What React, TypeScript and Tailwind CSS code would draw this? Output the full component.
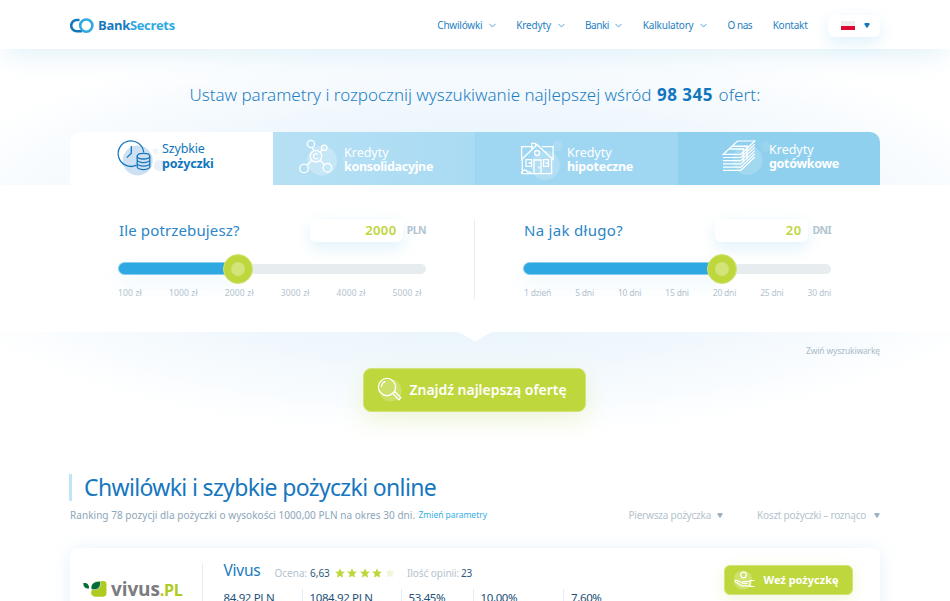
import type { ReactNode } from "react";

const navItems = [
  { label: "Chwilówki", menu: true, track: "tracking-[-0.24px]" },
  { label: "Kredyty", menu: true, track: "tracking-[-0.13px]" },
  { label: "Banki", menu: true, track: "tracking-[-0.44px]" },
  { label: "Kalkulatory", menu: true, track: "tracking-[-0.21px]" },
  { label: "O nas", menu: false, track: "tracking-[-0.43px]" },
  { label: "Kontakt", menu: false, track: "tracking-[-0.23px]" },
];

function Chevron() {
  return (
    <svg className="ml-[6.5px] h-[5px] w-[7px]" viewBox="0 0 7 5" fill="none" stroke="#4b9ad3" strokeWidth="0.9">
      <path d="M0.4 0.8 3.5 4 6.6 0.8" />
    </svg>
  );
}

function Triangle({ className }: { className: string }) {
  return (
    <svg className={className} viewBox="0 0 6 5" fill="currentColor">
      <path d="M1 0h4Q5.800 .2 5.500 1.200L3.600 4.400Q3 5 2.400 4.400L.5 1.200Q.2 .2 1 0Z" />
    </svg>
  );
}

function Logo() {
  return (
    <div className="flex items-center">
      <svg className="h-[16px] w-[25px]" viewBox="0 0 25 16" fill="none" strokeWidth="2.6">
        <path d="M9.500 2H6.800A5.600 5.600 0 0 0 6.800 13.200H12" stroke="#1276bd" />
        <circle cx="16.300" cy="7.600" r="6.100" stroke="#2fa9e1" />
      </svg>
      <span className="ml-[3px] font-['Open_Sans'] text-[13px] font-bold tracking-[-0.33px] text-[#1779c0]">
        Bank<span className="text-[#2fa9e1]">Secrets</span>
      </span>
    </div>
  );
}

function Header() {
  return (
    <header className="relative z-10 h-[49px] bg-white shadow-[0_12px_26px_-6px_rgba(60,175,225,0.16)]">
      <div className="mx-auto flex h-full w-[810px] items-center justify-between pt-[2px]">
        <Logo />
        <nav className="flex items-center text-[10px] text-[#1f7fc3]">
          {navItems.map((n) => (
            <a key={n.label} className="mr-[20.4px] flex items-center whitespace-nowrap">
              <span className={n.track}>{n.label}</span>
              {n.menu && <Chevron />}
            </a>
          ))}
          <div className="flex h-[22px] w-[52px] items-center rounded-md bg-white pl-[13px] shadow-[0_6px_16px_rgba(60,175,225,0.17)]">
            <span className="flex h-[9px] w-[14px] flex-col">
              <span className="h-[4.5px] bg-[#eeeeee]" />
              <span className="h-[4.5px] bg-[#dc0a32]" />
            </span>
            <Triangle className="ml-[8.5px] h-[5px] w-[6px] text-[#1276bd]" />
          </div>
        </nav>
      </div>
    </header>
  );
}

function ClockIcon() {
  return (
    <svg className="h-[40px] w-[44px] shrink-0 overflow-visible" viewBox="118 138 44 40" fill="none" stroke="#1677be" strokeWidth="1.3">
      <g fill="#cde1f2" stroke="none">
        <circle cx="137.7" cy="160.5" r="15" />
        <circle cx="155.7" cy="151" r="2.7" opacity=".35" />
        <circle cx="159.3" cy="165.5" r="5.5" opacity=".45" />
      </g>
      <path d="M136.5 165.2A12.8 12.8 0 1 1 143.7 152.4M131.3 146v7.3l-4.5 4.3" />
      <ellipse cx="143.5" cy="156.2" rx="6.3" ry="2.8" />
      <path d="M137.2 156.2v10.6c0 1.5 2.8 2.8 6.3 2.8s6.3-1.3 6.3-2.8v-10.6M137.2 159.8c0 1.5 2.8 2.8 6.3 2.8s6.3-1.3 6.3-2.8M137.2 163.3c0 1.5 2.8 2.8 6.3 2.8s6.3-1.3 6.3-2.8" />
    </svg>
  );
}

function NodesIcon() {
  return (
    <svg className="h-[40px] w-[44px] shrink-0 overflow-visible" viewBox="300 138 44 40" fill="none" stroke="#fff" strokeWidth="1.3">
      <g fill="#fff" stroke="none">
        <circle cx="322" cy="160.7" r="15" opacity=".25" />
        <circle cx="347" cy="159" r="5.2" opacity=".08" />
      </g>
      <circle cx="311" cy="144" r="3.7" />
      <circle cx="324.3" cy="147.8" r="2.7" />
      <circle cx="316" cy="156.3" r="5.7" />
      <circle cx="304" cy="168.4" r="4.3" />
      <circle cx="327.4" cy="167.8" r="4.3" />
      <path d="M312.4 147.4l1.6 3.6M322.3 149.8l-2.5 2.4M307 165.2l4.9-4.9M324.3 164.8l-4.2-4.6M318 154.5a2.6 2.6 0 1 0 0 3.6" />
    </svg>
  );
}

function HouseIcon() {
  return (
    <svg className="h-[40px] w-[46px] shrink-0 overflow-visible" viewBox="521 138 46 40" fill="none" stroke="#fff" strokeWidth="1.3">
      <g fill="#fff" stroke="none">
        <circle cx="545.3" cy="165.3" r="14.7" opacity=".2" />
        <circle cx="557.5" cy="145.8" r="5.3" opacity=".12" />
      </g>
      <path d="M533 146.7h-11.4v12.8l15.5-14.8 16 14.8v-12.8h-11.3M531.7 149v-5.6h4v2" />
      <path d="M522.3 159v14.7h29.3v-14.7M521.5 173.7c.2-4 4.5-5 6.3-1.6 2-.8 3.4 0 3.5 1.6M534 173.5v-13.5h7v13.5M538.8 166.5v2" />
      <path d="M526 159.7h5.5v6.6H526zM543.500 159.7h5v6.6h-5zM528.5 163h3M545.5 163h3" />
      <circle cx="537.1" cy="153" r="2.5" />
    </svg>
  );
}

function CashIcon() {
  return (
    <svg className="h-[40px] w-[46px] shrink-0 overflow-visible" viewBox="723 138 46 40" fill="none" stroke="#fff" strokeWidth="1.2">
      <g fill="#fff" stroke="none">
        <circle cx="747.5" cy="160" r="15" opacity=".18" />
        <circle cx="766" cy="146.8" r="5.3" opacity=".09" />
      </g>
      <path d="M723.3 154.3 737.5 141H754.8L740.8 154.3Z" />
      <path d="M723 157.5h17.8l14-13.3M723 160.7h17.800l14-13.300M723 163.900h17.800l14-13.300M723 167.100h17.800l14-13.300M723 170.300h17.800l14-13.300" />
      <path d="M732.5 146.2h14.5v13M729.5 149h14v13" strokeWidth="1.5" />
    </svg>
  );
}

type TabProps = { icon: ReactNode; top: string; bottom: string; className: string; trackTop: string; trackBottom: string };

function Tab({ icon, top, bottom, className, trackTop, trackBottom }: TabProps) {
  return (
    <button className={`flex h-[53px] w-full items-start text-left ${className}`}>
      {icon}
      <span className="relative flex flex-col text-[12.5px] leading-[14.5px]">
        <span className={trackTop}>{top}</span>
        <span className={`font-bold ${trackBottom}`}>{bottom}</span>
      </span>
    </button>
  );
}

type SliderProps = {
  title: string; titleTrack: string; value: string; unit: string; fill: string; thumb: string; marks: string[]; marksClass: string;
};

function Slider({ title, titleTrack, value, unit, fill, thumb, marks, marksClass }: SliderProps) {
  return (
    <div className="w-[308px]">
      <div className="flex h-[23px] items-center">
        <h3 className={`flex-1 whitespace-nowrap pl-px text-[15px] font-normal text-[#2b86c7] ${titleTrack}`}>{title}</h3>
        <div className="flex h-[23px] w-[93px] items-center justify-end rounded-md bg-white pr-[6px] text-[13px] font-semibold tracking-[0.4px] text-[#bdd63b] shadow-[0_6px_16px_rgba(60,175,225,0.16)]">
          {value}
        </div>
        <span className="w-[23.5px] text-right text-[10.5px] font-bold tracking-[-0.6px] text-[#b3c4d0]">{unit}</span>
      </div>
      <div className="relative mt-[21.5px] h-[10px] rounded-full bg-[#e7ecef]">
        <div className={`absolute -top-[1.5px] left-0 h-[13px] rounded-full border border-[#8bcdee] bg-[#2da8e1] shadow-[0_8px_20px_rgba(60,175,225,0.1)] ${fill}`} />
        <div className={`absolute -top-[10px] flex size-[30px] items-center justify-center rounded-full border border-[#d3e379] bg-[#bed73c] ${thumb}`}>
          <div className="size-[14px] rounded-full bg-[#d2e378]" />
        </div>
      </div>
      <div className={`mt-[13px] flex justify-between whitespace-nowrap text-[8.5px] text-[#b4c3ce] ${marksClass}`}>
        {marks.map((m) => (
          <span key={m}>{m}</span>
        ))}
      </div>
    </div>
  );
}

function Star({ className }: { className: string }) {
  return (
    <svg className={`size-[10px] ${className}`} viewBox="0 0 10 10" fill="currentColor">
      <path d="M5 .2 6.4 3.4 9.9 3.8 7.3 6.1 8 9.6 5 7.9 2 9.6 2.7 6.1.1 3.8 3.6 3.4Z" />
    </svg>
  );
}

const stats = [
  { value: "84,92 PLN", className: "w-[78px]" },
  { value: "1084,92 PLN", className: "w-[99px] border-l pl-[7px]" },
  { value: "53,45%", className: "w-[72px] border-l pl-[7px]" },
  { value: "10,00%", className: "w-[90.5px] border-l pl-[7px]" },
  { value: "7,60%", className: "border-l pl-[7px]" },
];

function OfferCard() {
  return (
    <article className="mt-[25px] flex h-[120px] rounded-lg bg-white shadow-[0_2px_20px_rgba(60,150,220,0.13)]">
      <div className="mt-[15px] flex h-[100px] w-[133px] items-start border-r border-[#dfeef8] pl-[13px]">
        <svg className="mt-[18px] h-[17px] w-[24px]" viewBox="0 0 24 17">
          <path d="M9 7.5C9 3 11 0 16 0h4.5Q23.5 0 23.5 3v9q0 3.8-4 3.8H12.5Q9.5 15.8 8 12.5Z" fill="#b0cb1f" />
          <path d="M8.2 8.3C7.5 3 10.5.2 17.5.2 18 6.5 15 9.800 8.200 8.300Z" fill="#046a38" stroke="#fff" strokeWidth=".6" />
          <path d="M.3 2C4.500 1.800 6.300 3.800 6 7.600 2.300 7.800.3 5.800.3 2Z" fill="#046a38" />
        </svg>
        <span className="ml-[4px] mt-[12px] font-['Open_Sans'] text-[19px] leading-[28px] font-bold tracking-[-0.1px] text-[#7b7c80]">
          vivus<span className="text-[16px] tracking-[-0.4px] text-[#b0cb1f]">.PL</span>
        </span>
      </div>
      <div className="flex-1 pl-[20.5px] pt-[13px]">
        <div className="flex h-[20px] items-center whitespace-nowrap text-[10px]">
          <span className="w-[51px] text-[15.5px] tracking-[-0.24px] text-[#1a7ac0]">Vivus</span>
          <span className="mt-[5px] w-[35.5px] text-[#b4c3ce]">Ocena:</span>
          <span className="mt-[5px] w-[24.5px] text-[#2d5878]">6,63</span>
          <span className="mt-[4px] flex gap-[2.6px] text-[#bed73c]">
            <Star className="" />
            <Star className="" />
            <Star className="" />
            <Star className="" />
            <Star className="text-[#f1f6da]" />
          </span>
          <span className="ml-[12px] mt-[5px] w-[54px] tracking-[-0.05px] text-[#b4c3ce]">Ilość opinii:</span>
          <span className="mt-[5px] text-[#2d5878]">23</span>
        </div>
        <div className="mt-[8px] flex whitespace-nowrap text-[11.5px] leading-[17px] tracking-[-0.37px] text-[#1d5078]">
          {stats.map((s) => (
            <span key={s.value} className={`border-[#dfeef8] ${s.className}`}>{s.value}</span>
          ))}
        </div>
      </div>
      <button className="mr-[27px] mt-[17px] flex h-[30px] w-[129px] items-center rounded-md border border-[#d3e379] bg-[#bed73c] pl-[8px] text-[11px] font-bold text-white shadow-[0_3px_14px_rgba(190,215,60,0.22)]">
        <svg className="mr-[8.5px] h-[20px] w-[22px]" viewBox="0 0 22 20" fill="none" stroke="#fff" strokeWidth="1.2">
          <circle cx="10" cy="10" r="9.5" fill="#fff" opacity=".25" stroke="none" />
          <circle cx="10.5" cy="5" r="2.8" />
          <path d="M21.5 10.5H17v6h4.5M17 11.5h-6c-2.5 0-2.5 1.8 0 1.8h3.5M8.5 12.5 4 10.5c-1.8-.5-2.5.8-1 1.8l6 3.5h8" />
        </svg>
        Weź pożyczkę
      </button>
    </article>
  );
}

export default function App() {
  return (
    <div className="h-[601px] w-full overflow-hidden bg-white font-['Noto_Sans',sans-serif]">
      <Header />
      <section className="h-[391px] bg-[radial-gradient(ellipse_580px_205px_at_475px_185px,#e4f1fb_0%,#eaf5fc_45%,#f5fafe_75%,#ffffff_100%)]">
        <h1 className="flex h-[83px] justify-center whitespace-nowrap pt-[33.5px] text-[17px] leading-[24px] font-light text-[#1f7fc3]">
          <span className="tracking-[-0.02px]">Ustaw parametry i rozpocznij wyszukiwanie najlepszej wśród</span>
          <strong className="mx-[5.5px] font-bold tracking-[0.49px] text-[#1276bd]">98 345</strong>
          <span className="tracking-[0.12px]">ofert:</span>
        </h1>
        <div className="mx-auto grid w-[810px] grid-cols-[203px_202px_203px_202px] overflow-hidden rounded-t-[10px] text-white">
          <Tab icon={<ClockIcon />} top="Szybkie" bottom="pożyczki" className="bg-white pl-[48px] pt-[6px] text-[#1276bd] [&>span]:pt-[4px]" trackTop="tracking-[-0.15px]" trackBottom="tracking-[-0.18px]" />
          <Tab icon={<NodesIcon />} top="Kredyty" bottom="konsolidacyjne" className="bg-linear-to-r from-[#b6e0f4] to-[#a9dbf3] pl-[27px] pt-[6px] [&>span]:pt-[7.5px]" trackTop="tracking-[-0.01px]" trackBottom="tracking-[-0.32px]" />
          <Tab icon={<HouseIcon />} top="Kredyty" bottom="hipoteczne" className="bg-[#9fd6f2] pl-[46px] pt-[6px] [&>span]:pt-[7.5px]" trackTop="tracking-[-0.01px]" trackBottom="tracking-[-0.26px]" />
          <Tab icon={<CashIcon />} top="Kredyty" bottom="gotówkowe" className="bg-[#8fd0ee] pl-[45px] pt-[6px] [&>span]:pt-[4.5px]" trackTop="tracking-[-0.01px]" trackBottom="tracking-[-0.33px]" />
        </div>
        <div className="h-[147px] bg-white">
          <div className="mx-auto flex w-[810px] pt-[34px]">
            <div className="flex w-[405px] justify-center border-r border-[#e3eef5]">
              <Slider title="Ile potrzebujesz?" titleTrack="tracking-[0.13px]" value="2000" unit="PLN" fill="w-[120px]" thumb="left-[105px]" marks={["100 zł", "1000 zł", "2000 zł", "3000 zł", "4000 zł", "5000 zł"]} marksClass="pr-[4.5px] tracking-[0.16px]" />
            </div>
            <div className="flex w-[405px] pl-[48px]">
              <Slider title="Na jak długo?" titleTrack="tracking-[0.3px]" value="20" unit="DNI" fill="w-[200px]" thumb="left-[184px]" marks={["1 dzień", "5 dni", "10 dni", "15 dni", "20 dni", "25 dni", "30 dni"]} marksClass="pl-px tracking-[-0.2px]" />
            </div>
          </div>
        </div>
        <div className="relative mx-auto flex w-[810px] flex-col items-center">
          <svg className="h-[10px] w-[38px]" viewBox="0 0 38 10" fill="#fff">
            <path d="M0 0H38Q36 0 34 1L20.500 8.700Q19 9.500 17.500 8.700L4 1Q2 0 0 0Z" />
          </svg>
          <a className="self-end pt-px text-[8.5px] leading-[16px] tracking-[-0.15px] text-[#a9bac6]">Zwiń wyszukiwarkę</a>
          <button className="mt-[9px] mr-px flex h-[44px] w-[223px] items-center rounded-lg border border-[#d3e379] bg-[#bed73c] pb-px pl-[12.5px] text-[14px] font-semibold tracking-[-0.03px] whitespace-nowrap text-white shadow-[0_8px_24px_rgba(190,215,60,0.2)]">
            <svg className="mr-[8px] h-[25px] w-[25px]" viewBox="0 0 25 25" fill="none" stroke="#fff" strokeWidth="1.3">
              <circle cx="13.5" cy="13.5" r="11" fill="#fff" opacity=".22" stroke="none" />
              <circle cx="10" cy="10" r="8.6" />
              <path d="M4.3 10A5.7 5.7 0 0 1 8.5 4.5M15.8 16.500l6 6.300 2-2-6-6.300M15.800 16.500l2-2" />
            </svg>
            Znajdź najlepszą ofertę
          </button>
        </div>
      </section>
      <main className="mx-auto w-[810px] pt-[34px]">
        <div className="-ml-[1.5px] border-l-[3px] border-[#bfe5f7]">
          <h2 className="h-[27px] whitespace-nowrap pl-[12.5px] text-[23px] leading-[27px] font-normal tracking-[-0.65px] text-[#1677be]">
            Chwilówki i szybkie pożyczki online
          </h2>
        </div>
        <div className="mt-[6.5px] flex h-[16px] items-center whitespace-nowrap text-[10px] text-[#b4c3ce]">
          <p className="flex flex-1 items-center">
            <span className="w-[348.5px] tracking-[0.04px] text-[#8ba6ba]">Ranking 78 pozycji dla pożyczki o wysokości 1000,00 PLN na okres 30 dni.</span>
            <a className="text-[8.5px] tracking-[-0.04px] text-[#36ade4]">Zmień parametry</a>
          </p>
          <span className="tracking-[-0.22px]">Pierwsza pożyczka</span>
          <Triangle className="ml-[6px] h-[5px] w-[6px] text-[#9fb2c0]" />
          <span className="ml-[34px] tracking-[-0.24px]">Koszt pożyczki – roznąco</span>
          <Triangle className="ml-[8px] h-[5px] w-[6px] text-[#9fb2c0]" />
        </div>
        <div className="-mt-[0.5px]">
          <OfferCard />
        </div>
      </main>
    </div>
  );
}
